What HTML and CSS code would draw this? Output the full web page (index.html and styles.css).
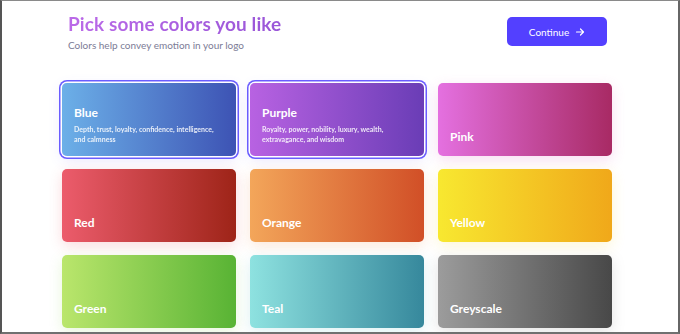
FILE: index.html
```html
<!DOCTYPE html>
<html lang="en">

<head>
    <meta charset="UTF-8">
    <meta name="viewport" content="width=device-width, initial-scale=1.0">
    <title>Pick some colors</title>
    <link rel="stylesheet" href="styles.css">
</head>

<body>
    <div class="janela">
        <div class="topo">
            <div class="titulos">
                <h1 class="titulo">Pick some colors you like</h1>
                <p class="subtitulo">Colors help convey emotion in your logo</p>
            </div>
            <button class="botao-continuar">Continue
                <svg width="10" height="10" viewBox="0 0 10 10" fill="none" stroke="currentColor" stroke-width="1.2"
                    stroke-linecap="round" stroke-linejoin="round">
                    <path d="M1.5 5h7M5.5 2l3 3-3 3" />
                </svg>
            </button>
        </div>

        <div class="grade">
            <div class="cartao azul selecionado">
                <h2>Blue</h2>
                <p>Depth, trust, loyalty, confidence, intelligence, and calmness</p>
            </div>
            <div class="cartao roxo selecionado">
                <h2>Purple</h2>
                <p>Royalty, power, nobility, luxury, wealth, extravagance, and wisdom</p>
            </div>
            <div class="cartao rosa">
                <h2>Pink</h2>
            </div>
            <div class="cartao vermelho">
                <h2>Red</h2>
            </div>
            <div class="cartao laranja">
                <h2>Orange</h2>
            </div>
            <div class="cartao amarelo">
                <h2>Yellow</h2>
            </div>
            <div class="cartao verde">
                <h2>Green</h2>
            </div>
            <div class="cartao teal">
                <h2>Teal</h2>
            </div>
            <div class="cartao cinza">
                <h2>Greyscale</h2>
            </div>
        </div>
    </div>
</body>

</html>
```

FILE: styles.css
```css
body {
    margin: 0;
    padding: 0;
    font-family: 'Lato', sans-serif;
    background: #ffffff;
}

.janela {
    width: 680px;
    height: 334px;
    box-sizing: border-box;
    border-top: 1px solid #8a8a8a;
    border-left: 2px solid #555555;
    border-right: 2px solid #666666;
    border-bottom: 2px solid #707070;
    overflow: hidden;
}

.topo {
    display: flex;
    justify-content: space-between;
    align-items: flex-start;
    padding: 11px 71px 0 66px;
}

.titulo {
    margin: 0;
    font-size: 19px;
    line-height: 24px;
    font-weight: 700;
    letter-spacing: 0.1px;
    background: linear-gradient(90deg, #bb6ae8, #9956d8);
    -webkit-background-clip: text;
    background-clip: text;
    color: transparent;
}

.subtitulo {
    margin: 3px 0 0 0;
    font-size: 10px;
    color: #7c7c96;
}

.botao-continuar {
    margin-top: 5px;
    width: 100px;
    height: 29px;
    display: flex;
    align-items: center;
    justify-content: center;
    gap: 6px;
    background-color: #5340ff;
    color: #ffffff;
    border: none;
    border-radius: 5px;
    font-family: 'Lato', sans-serif;
    font-size: 10px;
    cursor: pointer;
}

.grade {
    display: grid;
    grid-template-columns: repeat(3, 174px);
    grid-auto-rows: 73px;
    column-gap: 14px;
    row-gap: 13px;
    padding: 32px 0 0 60px;
}

.cartao {
    border-radius: 5px;
    padding: 0 12px 12px 12px;
    display: flex;
    flex-direction: column;
    justify-content: flex-end;
    color: #ffffff;
}

.cartao h2 {
    margin: 0;
    font-size: 12px;
    font-weight: 700;
    line-height: 14px;
}

.cartao p {
    margin: 4px 0 0 0;
    font-size: 7px;
    line-height: 10px;
    opacity: 0.85;
    font-weight: 700;
}

.selecionado {
    justify-content: flex-start;
    padding-bottom: 0;
    padding-top: 23px;
    box-shadow: 0 0 0 1.5px #ffffff, 0 0 0 3px #6a5cff, 0 4px 14px rgba(110, 90, 255, 0.15);
}

.azul {
    background: linear-gradient(90deg, #6cb0e8, #3d53b4);
}

.roxo {
    background: linear-gradient(90deg, #b862e2, #6a3db6);
}

.rosa {
    background: linear-gradient(90deg, #e470e0, #a82a64);
    box-shadow: 0 4px 14px rgba(220, 90, 190, 0.2);
}

.vermelho {
    background: linear-gradient(90deg, #ec5c6c, #9e2418);
    box-shadow: 0 4px 14px rgba(230, 80, 90, 0.2);
}

.laranja {
    background: linear-gradient(90deg, #f3a65a, #d14f27);
    box-shadow: 0 4px 14px rgba(240, 140, 70, 0.2);
}

.amarelo {
    background: linear-gradient(90deg, #f8e830, #f0a81a);
    box-shadow: 0 4px 14px rgba(245, 210, 40, 0.2);
}

.verde {
    background: linear-gradient(90deg, #bae66c, #58b334);
    box-shadow: 0 4px 14px rgba(140, 210, 80, 0.2);
}

.teal {
    background: linear-gradient(90deg, #8ee2e0, #36889c);
    box-shadow: 0 4px 14px rgba(90, 190, 200, 0.2);
}

.cinza {
    background: linear-gradient(90deg, #9c9c9c, #484848);
    box-shadow: 0 4px 14px rgba(120, 120, 120, 0.2);
}
```
